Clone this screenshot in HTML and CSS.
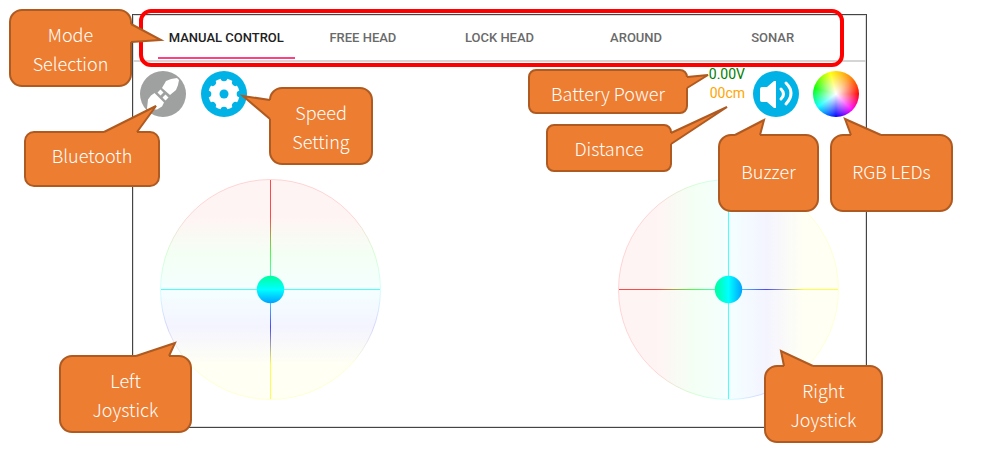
FILE: index.html
```html
<!DOCTYPE html>
<html lang="en">
<head>
<meta charset="utf-8">
<title>Robot controller guide</title>
<link rel="stylesheet" href="styles.css">
</head>
<body>
<main class="guide">
  <section class="panel">
    <nav class="tabs">
      <button class="tab tab-active">MANUAL CONTROL</button>
      <button class="tab">FREE HEAD</button>
      <button class="tab">LOCK HEAD</button>
      <button class="tab">AROUND</button>
      <button class="tab">SONAR</button>
    </nav>
    <div class="toolbar">
      <div class="tools">
        <button class="round off" aria-label="Bluetooth">
          <svg viewBox="0 0 46 46"><g fill="#fff"><path d="M22 17l4-7 5-2 6-1 2 2-1 5-2 5-6 5z"/><path d="M14.500 22l9.500 9.500-2 4-5 3-4 0-4 1-2-2 1-9 3-4z"/><path d="M17.500 21.500l3-3 3 3-3 3zM22.500 26.500l3-3 3 3-3 3z"/></g></svg>
        </button>
        <button class="round" aria-label="Speed setting">
          <svg viewBox="0 0 46 46"><circle cx="23" cy="23" r="15.500" fill="#fff"/><g fill="#00b2e5"><circle cx="23" cy="23" r="4.500"/><g id="notch"><circle cx="23" cy="7" r="3.300"/><circle cx="39" cy="23" r="3.300"/><circle cx="23" cy="39" r="3.300"/><circle cx="7" cy="23" r="3.300"/></g><use href="#notch" transform="rotate(45 23 23)"/></g></svg>
        </button>
      </div>
      <div class="tools tools-end">
        <div class="readout"><span class="volts">0.00V</span><span class="range">00cm</span></div>
        <button class="round" aria-label="Buzzer">
          <svg viewBox="0 0 46 46"><path fill="#fff" d="M9 16h5l7-6h2v27h-2l-7-6H9q-2 0-2-2V18q0-2 2-2z"/><g fill="none" stroke="#fff" stroke-width="3" stroke-linecap="round"><path d="M28 18q5 5 0 10M33 12q10 10 0 21"/></g></svg>
        </button>
        <button class="round wheel" aria-label="RGB LEDs"></button>
      </div>
    </div>
    <div class="sticks">
      <svg class="stick" viewBox="0 0 221 221" role="img" aria-label="Left joystick">
        <defs><linearGradient id="v" gradientUnits="userSpaceOnUse" x1="0" y1="0" x2="0" y2="221"><stop offset=".17" stop-color="#f00"/><stop offset=".34" stop-color="#0f0"/><stop offset=".5" stop-color="#0ff"/><stop offset=".67" stop-color="#00f"/><stop offset=".84" stop-color="#ff0"/></linearGradient></defs>
        <circle cx="110.500" cy="110.500" r="110" fill="url(#v)" fill-opacity=".045" stroke="url(#v)" stroke-opacity=".15"/>
        <rect x="110" y="1" width="1" height="219" fill="url(#v)" fill-opacity=".7"/>
        <rect x="1" y="110" width="219" height="1" fill="#0ff" fill-opacity=".7"/>
        <circle cx="110.500" cy="110.500" r="13.700" fill="url(#v)"/>
      </svg>
      <svg class="stick" viewBox="0 0 221 221" role="img" aria-label="Right joystick">
        <defs><linearGradient id="h" gradientUnits="userSpaceOnUse" x1="0" y1="0" x2="221" y2="0"><stop offset=".17" stop-color="#f00"/><stop offset=".34" stop-color="#0f0"/><stop offset=".5" stop-color="#0ff"/><stop offset=".67" stop-color="#00f"/><stop offset=".84" stop-color="#ff0"/></linearGradient></defs>
        <circle cx="110.500" cy="110.500" r="110" fill="url(#h)" fill-opacity=".045" stroke="url(#h)" stroke-opacity=".15"/>
        <rect x="110" y="1" width="1" height="219" fill="#0ff" fill-opacity=".7"/>
        <rect x="1" y="110" width="219" height="1" fill="url(#h)" fill-opacity=".7"/>
        <circle cx="110.500" cy="110.500" r="13.700" fill="url(#h)"/>
      </svg>
    </div>
  </section>

  <div class="highlight"></div>
  <div class="callout mode"><svg class="tail"><path class="fill" d="M120 15L122 15L152 31L122 33L120 33"/><path class="edge" d="M122 15L152 31L122 33"/></svg><span>Mode<br>Selection</span></div>
  <div class="callout bluetooth"><svg class="tail"><path class="fill" d="M80 3L80 1L132 -25L113 1L113 3"/><path class="edge" d="M80 1L132 -25L113 1"/></svg><span>Bluetooth</span></div>
  <div class="callout speed"><svg class="tail"><path class="fill" d="M3 13L1 13L-26 9L1 32L3 32"/><path class="edge" d="M1 13L-26 9L1 32"/></svg><span>Speed<br>Setting</span></div>
  <div class="callout battery"><svg class="tail"><path class="fill" d="M157 8L159 8L180 6L159 19L157 19"/><path class="edge" d="M159 8L180 6L159 19"/></svg><span>Battery Power</span></div>
  <div class="callout distance"><svg class="tail"><path class="fill" d="M123 9L125 9L181 -17L125 20L123 20"/><path class="edge" d="M125 9L181 -17L125 20"/></svg><span>Distance</span></div>
  <div class="callout buzzer"><svg class="tail"><path class="fill" d="M17 3L17 1L46 -14L42 1L42 3"/><path class="edge" d="M17 1L46 -14L42 1"/></svg><span>Buzzer</span></div>
  <div class="callout leds"><svg class="tail"><path class="fill" d="M21 3L21 1L15 -15L51 1L51 3"/><path class="edge" d="M21 1L15 -15L51 1"/></svg><span>RGB LEDs</span></div>
  <div class="callout left"><svg class="tail"><path class="fill" d="M77 3L77 1L116 -12L110 1L110 3"/><path class="edge" d="M77 1L116 -12L110 1"/></svg><span>Left<br>Joystick</span></div>
  <div class="callout right"><svg class="tail"><path class="fill" d="M20 3L20 1L17 -14L49 1L49 3"/><path class="edge" d="M20 1L17 -14L49 1"/></svg><span>Right<br>Joystick</span></div>
</main>
</body>
</html>
```
FILE: styles.css
```css
* { box-sizing: border-box; }
body { margin: 0; background: #fff; font-family: Roboto, "Liberation Sans", sans-serif; }
button { border: 0; padding: 0; background: none; font: inherit; cursor: pointer; }
.guide { position: relative; padding: 14px 129px 24px 132px; }

.panel { border: 1px solid #444; padding-bottom: 27px; box-shadow: inset 0 0 0 1px #ddd; }
.tabs { display: flex; padding: 0 25px; height: 47px; border-bottom: 2px solid #d5d5d5; }
.tab { flex: 1; border-bottom: 2px solid transparent; padding-top: 2px; font-size: 13px; font-weight: 500; color: #6a6a6a; white-space: nowrap; margin-bottom: 1px; }
.tab-active { color: #212121; border-bottom-color: #ff4081; }

.toolbar { display: flex; justify-content: space-between; padding: 9px 7px 0; }
.tools { display: flex; gap: 15px; }
.tools-end { gap: 14px; }
.round { width: 46px; height: 46px; border-radius: 50%; background: #00b2e5; }
.round svg { display: block; width: 46px; height: 46px; }
.off { background: #9fa1a0; }
.wheel { background: radial-gradient(closest-side, #fff, rgba(255,255,255,0)), conic-gradient(#fd0 0deg, #f80 40deg, #f00 90deg, #f0f 135deg, #00f 180deg, #0ff 235deg, #0f0 285deg, #ff0 345deg, #fd0 360deg); }
.readout { display: flex; flex-direction: column; align-items: flex-end; font-size: 14px; line-height: 19px; margin: -6px -6px 0 0; }
.volts { color: #008000; }
.range { color: #ffa500; }

.sticks { display: flex; justify-content: space-between; padding: 62px 27px 0; }
.stick { width: 221px; height: 221px; }

.highlight { position: absolute; left: 139px; right: 152px; top: 9px; height: 58px; border: 4px solid #f00; border-radius: 12px; pointer-events: none; }
.callout { position: absolute; display: flex; align-items: center; justify-content: center; text-align: center; border: 2px solid #ae5a21; border-radius: 13px; background: #ed7d31; color: #fff; font-family: "Noto Sans CJK SC", "Noto Sans", sans-serif; font-weight: 300; font-size: 18px; line-height: 29px; height: 78px; padding-top: 2px; }
.tail { position: absolute; left: -2px; top: -2px; width: 100%; height: 100%; overflow: visible; }
.fill { fill: #ed7d31; }
.edge { fill: none; stroke: #ae5a21; stroke-width: 2; }
.callout span { position: relative; }
.mode { left: 9px; top: 9px; width: 123px; }
.bluetooth { left: 24px; top: 131px; width: 136px; height: 56px; border-radius: 10px; padding: 0 0 8px; }
.speed { left: 269px; top: 87px; width: 104px; }
.battery { right: 308px; top: 69px; width: 160px; height: 45px; border-radius: 8px; padding-top: 4px; }
.distance { right: 324px; top: 124px; width: 126px; height: 48px; border-radius: 8px; padding: 0; }
.buzzer { right: 177px; top: 134px; width: 101px; padding: 0 0 4px; }
.leds { right: 43px; top: 134px; width: 123px; padding: 0 0 4px; }
.left { left: 59px; top: 355px; width: 133px; }
.right { right: 113px; top: 365px; width: 119px; }
```
